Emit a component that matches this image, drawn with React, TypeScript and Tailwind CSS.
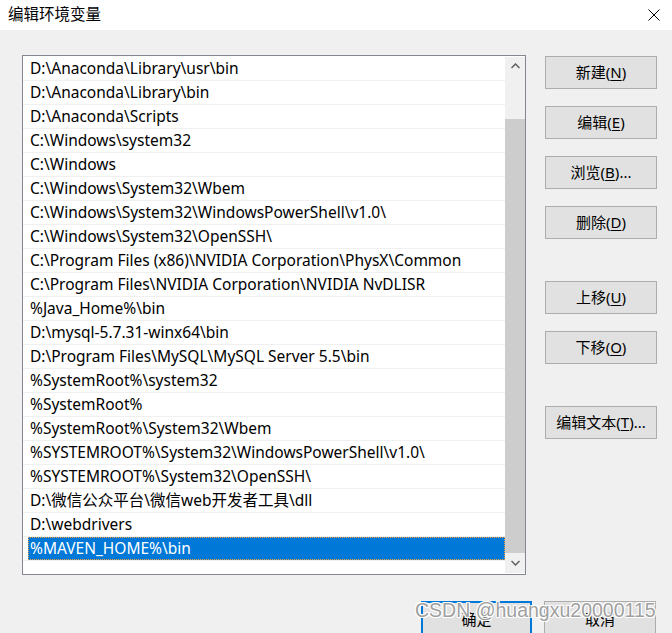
import React from "react";

const paths = [
  "D:\\Anaconda\\Library\\usr\\bin",
  "D:\\Anaconda\\Library\\bin",
  "D:\\Anaconda\\Scripts",
  "C:\\Windows\\system32",
  "C:\\Windows",
  "C:\\Windows\\System32\\Wbem",
  "C:\\Windows\\System32\\WindowsPowerShell\\v1.0\\",
  "C:\\Windows\\System32\\OpenSSH\\",
  "C:\\Program Files (x86)\\NVIDIA Corporation\\PhysX\\Common",
  "C:\\Program Files\\NVIDIA Corporation\\NVIDIA NvDLISR",
  "%Java_Home%\\bin",
  "D:\\mysql-5.7.31-winx64\\bin",
  "D:\\Program Files\\MySQL\\MySQL Server 5.5\\bin",
  "%SystemRoot%\\system32",
  "%SystemRoot%",
  "%SystemRoot%\\System32\\Wbem",
  "%SYSTEMROOT%\\System32\\WindowsPowerShell\\v1.0\\",
  "%SYSTEMROOT%\\System32\\OpenSSH\\",
  "D:\\微信公众平台\\微信web开发者工具\\dll",
  "D:\\webdrivers",
  "%MAVEN_HOME%\\bin",
];

const font = {
  fontFamily: '"Microsoft YaHei UI", "Noto Sans", "Noto Sans CJK SC", sans-serif',
};

function WinButton({
  label,
  hotkey,
  suffix = "",
  className = "",
}: {
  label: string;
  hotkey: string;
  suffix?: string;
  className?: string;
}) {
  return (
    <button
      className={`flex h-[33px] w-[112px] items-center justify-center border border-[#adadad] bg-[#e1e1e1] text-[15px] text-black ${className}`}
    >
      {label}(<span className="underline underline-offset-2">{hotkey}</span>){suffix}
    </button>
  );
}

export default function App() {
  return (
    <div
      className="relative h-[633px] w-[672px] overflow-hidden bg-[#f0f0f0] text-black"
      style={font}
    >
      {/* Title bar */}
      <div className="flex h-[30px] items-center justify-between bg-white pl-[8px] pr-[12px]">
        <span className="text-[15.5px] leading-none">编辑环境变量</span>
        <svg width="12" height="12" viewBox="0 0 12 12">
          <path d="M0.5 0.5 L11.5 11.5 M11.5 0.5 L0.5 11.5" stroke="#000" strokeWidth="1" />
        </svg>
      </div>

      <div className="flex pl-[22px] pt-[25px]">
        {/* List box */}
        <div className="flex h-[520px] w-[504px] border border-[#828790] bg-white">
          <div className="flex-1 pt-[1px]">
            {paths.map((p, i) => {
              const selected = i === paths.length - 1;
              return (
                <div key={i} className="h-[24px] border-b border-[#f0f0f0]">
                  {selected ? (
                    <div className="ml-[5px] flex h-[23px] items-center border border-dotted border-[#f7a03c] bg-[#0078d7] pl-[1px] pt-[1px] text-[15.5px] text-white">
                      {p}
                    </div>
                  ) : (
                    <div className="flex h-[23px] items-center pl-[7px] pt-[1px] text-[15.5px] whitespace-nowrap">
                      {p}
                    </div>
                  )}
                </div>
              );
            })}
          </div>
          {/* Scrollbar */}
          <div className="mt-[1px] mb-[1px] flex w-[20px] flex-col bg-[#f0f0f0]">
            <div className="flex h-[18px] items-center justify-center">
              <svg width="9" height="6" viewBox="0 0 9 6">
                <path d="M0.5 5 L4.5 1 L8.5 5" fill="none" stroke="#606060" strokeWidth="1.5" />
              </svg>
            </div>
            <div className="h-[44px]" />
            <div className="flex-1 bg-[#cdcdcd]" />
            <div className="flex h-[20px] items-center justify-center">
              <svg width="9" height="6" viewBox="0 0 9 6">
                <path d="M0.5 1 L4.5 5 L8.5 1" fill="none" stroke="#606060" strokeWidth="1.5" />
              </svg>
            </div>
          </div>
        </div>

        {/* Side buttons */}
        <div className="ml-[19px] flex flex-col pt-[1px]">
          <WinButton label="新建" hotkey="N" />
          <WinButton label="编辑" hotkey="E" className="mt-[17px]" />
          <WinButton label="浏览" hotkey="B" suffix="..." className="mt-[17px]" />
          <WinButton label="删除" hotkey="D" className="mt-[17px]" />
          <WinButton label="上移" hotkey="U" className="mt-[42px]" />
          <WinButton label="下移" hotkey="O" className="mt-[17px]" />
          <WinButton label="编辑文本" hotkey="T" suffix="..." className="mt-[42px]" />
        </div>
      </div>

      {/* Bottom buttons */}
      <div className="flex justify-end gap-[12px] pr-[16px] pt-[26px]">
        <button className="flex h-[36px] w-[111px] items-center justify-center border-2 border-[#0078d7] bg-[#e1e1e1] text-[15px]">
          确定
        </button>
        <button className="flex h-[36px] w-[112px] items-center justify-center border border-[#adadad] bg-[#e1e1e1] text-[15px]">
          取消
        </button>
      </div>

      {/* Watermark */}
      <div
        className="absolute left-[415px] top-[601px] text-[19.5px] leading-none text-[#a0a0a0] whitespace-nowrap"
        style={{
          fontFamily: '"Liberation Sans", Arial, sans-serif',
          textShadow: "1px 1px 0 #fff, -1px -1px 0 #fff, 1px -1px 0 #fff, -1px 1px 0 #fff",
        }}
      >
        CSDN @huangxu20000115
      </div>
    </div>
  );
}
